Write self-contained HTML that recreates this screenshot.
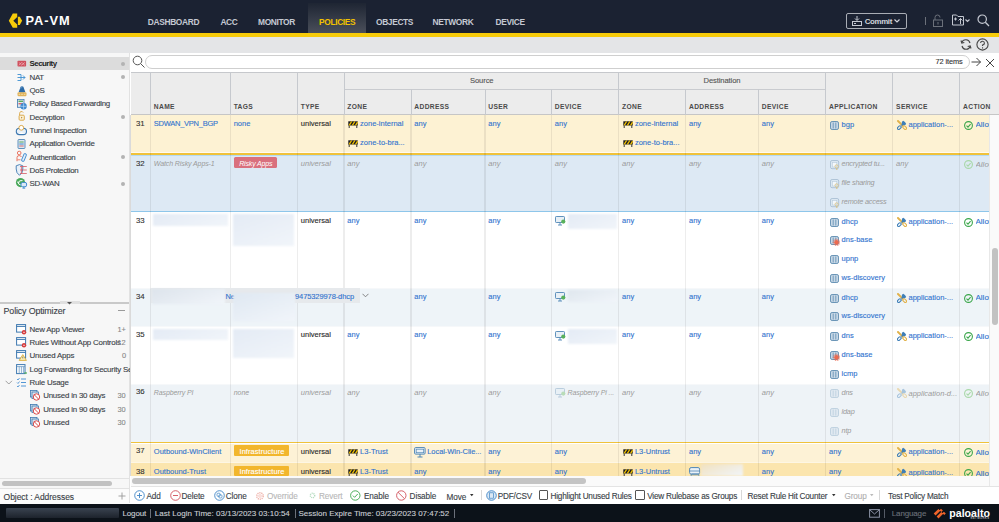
<!DOCTYPE html>
<html><head><meta charset="utf-8"><style>
html,body{margin:0;padding:0;}
body{width:999px;height:522px;overflow:hidden;position:relative;background:#fff;font-family:"Liberation Sans",sans-serif;}
.t{position:absolute;white-space:nowrap;}
.s{-webkit-text-stroke:0.12px currentColor;}
.b{position:absolute;box-sizing:content-box;}
</style></head><body>
<div class="b" style="left:0px;top:0px;width:999px;height:33px;background:#1b2232;"></div>
<div class="b" style="left:0px;top:33px;width:999px;height:4px;background:#f7cb0a;"></div>
<svg class="b" style="left:8px;top:13px;" width="16" height="16" viewBox="0 0 16 16"><path fill-rule="evenodd" d="M4.8 0.6 H9.2 V14.8 H4.8 L0.8 7.7 Z M9.2 4 L5.3 7.7 L9.2 11.5 Z" fill="#f7cb0a"/><path d="M9.9 3.8 H11.8 L14.1 7.7 L11.8 11.9 H9.9 Z" fill="#f7cb0a"/></svg>
<div class="t" style="left:25.50px;top:15.06px;font-size:12.8px;line-height:12px;color:#ffffff;font-weight:bold;letter-spacing:1.0px;">PA-VM</div>
<div class="b" style="left:308px;top:3px;width:58px;height:30px;background:linear-gradient(#1e2533,#4a4f5a);"></div>
<div class="t" style="left:147.80px;top:16.29px;font-size:8.4px;line-height:12px;color:#c5c9d2;font-weight:bold;letter-spacing:-0.35px;">DASHBOARD</div>
<div class="t" style="left:220.40px;top:16.29px;font-size:8.4px;line-height:12px;color:#c5c9d2;font-weight:bold;letter-spacing:-0.35px;">ACC</div>
<div class="t" style="left:258.00px;top:16.29px;font-size:8.4px;line-height:12px;color:#c5c9d2;font-weight:bold;letter-spacing:-0.35px;">MONITOR</div>
<div class="t" style="left:319.00px;top:16.29px;font-size:8.4px;line-height:12px;color:#f2c200;font-weight:bold;letter-spacing:-0.35px;">POLICIES</div>
<div class="t" style="left:376.00px;top:16.29px;font-size:8.4px;line-height:12px;color:#c5c9d2;font-weight:bold;letter-spacing:-0.35px;">OBJECTS</div>
<div class="t" style="left:432.60px;top:16.29px;font-size:8.4px;line-height:12px;color:#c5c9d2;font-weight:bold;letter-spacing:-0.35px;">NETWORK</div>
<div class="t" style="left:495.60px;top:16.29px;font-size:8.4px;line-height:12px;color:#c5c9d2;font-weight:bold;letter-spacing:-0.35px;">DEVICE</div>
<div class="b" style="left:846px;top:13px;width:59px;height:14px;border:1.2px solid #a9adb5;border-radius:2px;"></div>
<svg class="b" style="left:852px;top:16px;" width="10" height="10" viewBox="0 0 10 10"><path d="M5 0 V4 M3 2.5 L5 4.5 L7 2.5" stroke="#c5c9d2" stroke-width="1" fill="none"/><rect x="0.5" y="5.5" width="9" height="4" fill="none" stroke="#c5c9d2" stroke-width="1"/><rect x="2" y="7" width="2" height="1" fill="#c5c9d2"/></svg>
<div class="t" style="left:864.70px;top:15.56px;font-size:7.9px;line-height:12px;color:#d0d3da;font-weight:bold;letter-spacing:-0.35px;">Commit</div>
<svg class="b" style="left:894px;top:19px;" width="6" height="4" viewBox="0 0 6 4"><path d="M0.5 0.5 L3 3 L5.5 0.5" stroke="#d0d3da" stroke-width="1.2" fill="none"/></svg>
<div class="b" style="left:925px;top:17px;width:1px;height:8px;background:#6b707a;"></div>
<svg class="b" style="left:932px;top:14px;" width="12" height="13" viewBox="0 0 12 13"><path d="M3 6 V3.5 A2.5 2.5 0 0 1 8 3.5" stroke="#6b707a" stroke-width="1" fill="none"/><rect x="1.5" y="6" width="9" height="6.5" fill="none" stroke="#6b707a" stroke-width="1"/><rect x="5.5" y="8" width="1" height="2.5" fill="#6b707a"/></svg>
<svg class="b" style="left:952px;top:14px;" width="20" height="12" viewBox="0 0 20 12"><path d="M0.5 1 H4.5 L6 2.5 H11.5 V11 H0.5 Z" fill="none" stroke="#c5c9d2" stroke-width="1"/><path d="M2 5 H5 M3.5 3.5 V6.5 M8.5 10 V4.5 M6.5 6.5 L8.5 4.5 L10.5 6.5" stroke="#c5c9d2" stroke-width="1" fill="none"/><path d="M13.5 5.5 L15.5 7.5 L17.5 5.5" stroke="#c5c9d2" stroke-width="1.1" fill="none"/></svg>
<svg class="b" style="left:977px;top:14px;" width="13" height="13" viewBox="0 0 13 13"><circle cx="5.2" cy="5.2" r="4.2" stroke="#c5c9d2" stroke-width="1.2" fill="none"/><path d="M8.3 8.3 L12 12" stroke="#c5c9d2" stroke-width="1.3"/></svg>
<div class="b" style="left:0px;top:37px;width:999px;height:16px;background:#e4e5e7;"></div>
<svg class="b" style="left:960px;top:39px;" width="12" height="11" viewBox="0 0 12 11"><path d="M10 4 A4.3 4.3 0 0 0 1.8 3.5 M2 7 A4.3 4.3 0 0 0 10.2 7.5" stroke="#444" stroke-width="1.1" fill="none"/><path d="M1 1.5 L1.8 4 L4.3 3.5 M11 9.5 L10.2 7 L7.7 7.5" stroke="#444" stroke-width="1.1" fill="none"/></svg>
<svg class="b" style="left:976px;top:38px;" width="13" height="13" viewBox="0 0 13 13"><circle cx="6.5" cy="6.5" r="5.6" stroke="#444" stroke-width="1.1" fill="none"/><path d="M4.6 5 A1.9 1.9 0 1 1 6.5 7 V8" stroke="#444" stroke-width="1.1" fill="none"/><rect x="6" y="9.3" width="1.1" height="1.2" fill="#444"/></svg>
<div class="b" style="left:0px;top:53px;width:129px;height:450px;background:#f7f7f7;"></div>
<div class="b" style="left:129px;top:53px;width:1.2px;height:450px;background:#e2e2e2;"></div>
<div class="b" style="left:0px;top:57px;width:129px;height:13px;background:#dcdcdc;"></div>
<div class="t" style="left:29.50px;top:58.26px;font-size:7.9px;line-height:12px;color:#222;font-weight:bold;letter-spacing:-0.5px;">Security</div>
<div class="b" style="left:121px;top:61.6px;width:4px;height:4px;border-radius:50%;background:#b3b3b3"></div>
<div class="t s" style="left:29.50px;top:71.59px;font-size:7.9px;line-height:12px;color:#3a3f47;letter-spacing:-0.3px;">NAT</div>
<div class="b" style="left:121px;top:74.9px;width:4px;height:4px;border-radius:50%;background:#b3b3b3"></div>
<div class="t s" style="left:29.50px;top:84.92px;font-size:7.9px;line-height:12px;color:#3a3f47;letter-spacing:-0.3px;">QoS</div>
<div class="t s" style="left:29.50px;top:98.25px;font-size:7.9px;line-height:12px;color:#3a3f47;letter-spacing:-0.3px;">Policy Based Forwarding</div>
<div class="t s" style="left:29.50px;top:111.58px;font-size:7.9px;line-height:12px;color:#3a3f47;letter-spacing:-0.3px;">Decryption</div>
<div class="b" style="left:121px;top:114.9px;width:4px;height:4px;border-radius:50%;background:#b3b3b3"></div>
<div class="t s" style="left:29.50px;top:124.91px;font-size:7.9px;line-height:12px;color:#3a3f47;letter-spacing:-0.3px;">Tunnel Inspection</div>
<div class="t s" style="left:29.50px;top:138.24px;font-size:7.9px;line-height:12px;color:#3a3f47;letter-spacing:-0.3px;">Application Override</div>
<div class="t s" style="left:29.50px;top:151.57px;font-size:7.9px;line-height:12px;color:#3a3f47;letter-spacing:-0.3px;">Authentication</div>
<div class="b" style="left:121px;top:154.9px;width:4px;height:4px;border-radius:50%;background:#b3b3b3"></div>
<div class="t s" style="left:29.50px;top:164.90px;font-size:7.9px;line-height:12px;color:#3a3f47;letter-spacing:-0.3px;">DoS Protection</div>
<div class="t s" style="left:29.50px;top:178.23px;font-size:7.9px;line-height:12px;color:#3a3f47;letter-spacing:-0.3px;">SD-WAN</div>
<div class="b" style="left:121px;top:181.6px;width:4px;height:4px;border-radius:50%;background:#b3b3b3"></div>
<svg class="b" style="left:16.5px;top:60.4px;" width="10" height="11" viewBox="0 0 10 11"><rect x="0.5" y="0.8" width="8.6" height="5.8" rx="0.8" fill="#cf4f5c"/><path d="M1.8 2.4 L3.4 3.8 L1.8 5.2 M4.8 2.4 L3.4 3.8 L4.8 5.2 M7.8 2.4 L6.2 3.8 L7.8 5.2 M4.8 2.4 L6.2 3.8 L4.8 5.2" stroke="#f3c6cb" stroke-width="0.6" fill="none"/></svg>
<svg class="b" style="left:16.5px;top:72.63px;" width="10" height="11" viewBox="0 0 10 11"><path d="M0.5 1.5 H4 M0.5 4.5 H8 M0.5 7.5 H4 M4 1.5 V7.5 M6 2.5 L8 4.5 L6 6.5" stroke="#3c8fd0" stroke-width="0.9" fill="none"/></svg>
<svg class="b" style="left:16.5px;top:85.96px;" width="10" height="11" viewBox="0 0 10 11"><path d="M5 0.3 Q6.8 0.3 7 2.5 L8.3 6 Q5 7.2 1.7 6 L3 2.5 Q3.2 0.3 5 0.3 Z" fill="#2c6aa6"/><path d="M3.6 2.5 Q4.3 1.4 5.2 1.6" stroke="#8fc0ea" stroke-width="0.6" fill="none"/><rect x="0.5" y="6.3" width="9" height="4" rx="1.2" fill="#e0b35a"/><path d="M1.6 8.3 h1.6 M4.2 8.3 h1.6 M6.8 8.3 h1.6" stroke="#f7e8c6" stroke-width="0.8"/></svg>
<svg class="b" style="left:16.5px;top:99.29px;" width="10" height="11" viewBox="0 0 10 11"><rect x="0.5" y="0.3" width="6.5" height="8" fill="#dfe7ee" stroke="#3d78b0" stroke-width="0.8"/><rect x="1.5" y="1.6" width="4.5" height="1.4" fill="#5cab5c"/><rect x="1.5" y="4" width="4.5" height="1.4" fill="#d96a6a"/><circle cx="6.6" cy="7.3" r="3.2" fill="#3e8ad0"/><path d="M3.6 7.3 H9.6 M6.6 4.3 V10.3" stroke="#cfe3f5" stroke-width="0.6"/></svg>
<svg class="b" style="left:16.5px;top:139.28000000000003px;" width="10" height="11" viewBox="0 0 10 11"><rect x="1" y="0.5" width="7" height="9" rx="0.8" fill="#dbe6f0" stroke="#3d78b0" stroke-width="0.8"/><path d="M2.3 3 H6.7" stroke="#5cab5c" stroke-width="1"/><path d="M2.3 5 H6.7" stroke="#3e8ad0" stroke-width="1"/><path d="M2.3 7 H6.7" stroke="#d96a6a" stroke-width="1"/></svg>
<svg class="b" style="left:14px;top:110px;" width="16" height="80" viewBox="0 0 16 80">
<path d="M5.6 5.2 V3.6 A1.9 1.9 0 0 1 9.2 2.6" stroke="#d8a23c" stroke-width="0.9" fill="none"/>
<rect x="5.1" y="5.2" width="5.2" height="5" rx="1" fill="#fbf1d8" stroke="#d8a23c" stroke-width="0.9"/>
<path d="M7 6.8 L8.6 7.7 L7 8.6 Z" fill="#b8862c"/>
<rect x="2.3" y="18.3" width="10.2" height="6.3" rx="3.1" fill="#e8f0f8" stroke="#3d78b0" stroke-width="1.1"/>
<circle cx="7.3" cy="17.8" r="2.4" fill="#fff" stroke="#d8a23c" stroke-width="0.9"/>
<path d="M5 24 Q7.3 20.6 10 24 Z" fill="#fff"/>
<circle cx="5.2" cy="43" r="1.8" fill="none" stroke="#e8654f" stroke-width="0.9"/>
<path d="M3 51.2 V47.5 Q3 45.6 5.2 45.6 Q7 45.6 7.4 47" stroke="#e8654f" stroke-width="0.9" fill="none"/>
<path d="M3.4 49.8 H6.5" stroke="#e8654f" stroke-width="0.8"/>
<rect x="-1.3" y="-4" width="2.6" height="8" rx="1.1" transform="translate(10 47.5) rotate(22)" fill="#e3eef8" stroke="#3e8ad0" stroke-width="0.9"/>
<path d="M5.5 54.6 L8.8 55.8 V59 Q8.8 63.2 5.5 65.3 Q2.2 63.2 2.2 59 V55.8 Z" fill="#e8f0f8" stroke="#3d78b0" stroke-width="0.9"/>
<path d="M7.4 56.5 V63.5 M6 56.5 H12.8 M6 60 H12.8 M6 63.5 H12.8" stroke="#d65a64" stroke-width="0.8"/>
<circle cx="6.5" cy="72.6" r="4.6" fill="#49a85a"/>
<path d="M8.5 70.6 Q5 70 4.2 72.6 Q4.6 75 7 75" stroke="#fff" stroke-width="1" fill="none"/>
<path d="M3.5 71.6 L4.2 73 L5.6 72" stroke="#fff" stroke-width="0.8" fill="none"/>
<rect x="7" y="72.4" width="5.6" height="4.4" rx="1.6" fill="#dbe9f6" stroke="#3e8ad0" stroke-width="1"/>
<path d="M9.8 76.8 V78 M8.5 78.2 H11.2" stroke="#3e8ad0" stroke-width="0.9"/>
</svg>
<div class="b" style="left:0px;top:301.5px;width:129px;height:2px;background:#c9c9c9;"></div>
<div class="b" style="left:60px;top:301px;width:20px;height:3px;background:#e0e0e0;"></div>
<svg class="b" style="left:67px;top:302px;" width="6" height="3" viewBox="0 0 6 3"><path d="M0 0 H5 L2.5 2.5 Z" fill="#555"/></svg>
<div class="t s" style="left:3.60px;top:304.72px;font-size:8.9px;line-height:12px;color:#3a3f47;letter-spacing:-0.15px;">Policy Optimizer</div>
<div class="b" style="left:118px;top:309.5px;width:7px;height:1px;background:#9a9a9a;"></div>
<div class="t s" style="left:29.50px;top:323.56px;font-size:7.9px;line-height:12px;color:#3a3f47;letter-spacing:-0.2px;">New App Viewer</div>
<div class="t s" style="left:117.50px;top:323.74px;font-size:7.4px;line-height:12px;color:#888;">1+</div>
<svg class="b" style="left:16px;top:324px;" width="11" height="11" viewBox="0 0 11 11"><rect x="0.6" y="0.6" width="9" height="7.5" fill="#fff" stroke="#3d78b0" stroke-width="1"/><path d="M0.6 2.4 H9.6" stroke="#3d78b0" stroke-width="1"/><circle cx="8" cy="8.3" r="2.2" fill="#d63a3a"/><path d="M7 8.3 H9" stroke="#fff" stroke-width="0.7"/></svg>
<div class="t s" style="left:29.50px;top:336.89px;font-size:7.9px;line-height:12px;color:#3a3f47;letter-spacing:-0.2px;">Rules Without App Controls</div>
<div class="t s" style="left:117.50px;top:337.07px;font-size:7.4px;line-height:12px;color:#888;">12</div>
<svg class="b" style="left:16px;top:337px;" width="11" height="11" viewBox="0 0 11 11"><rect x="0.6" y="0.6" width="9" height="7.5" fill="#fff" stroke="#3d78b0" stroke-width="1"/><path d="M0.6 2.4 H9.6" stroke="#3d78b0" stroke-width="1"/><circle cx="8" cy="8.3" r="2.2" fill="#d63a3a"/><path d="M7 8.3 H9" stroke="#fff" stroke-width="0.7"/></svg>
<div class="t s" style="left:29.50px;top:350.22px;font-size:7.9px;line-height:12px;color:#3a3f47;letter-spacing:-0.2px;">Unused Apps</div>
<div class="t s" style="left:122.00px;top:350.40px;font-size:7.4px;line-height:12px;color:#888;">0</div>
<svg class="b" style="left:16px;top:350px;" width="11" height="11" viewBox="0 0 11 11"><rect x="0.6" y="0.6" width="9" height="7.5" fill="#fff" stroke="#3d78b0" stroke-width="1"/><path d="M0.6 2.4 H9.6" stroke="#3d78b0" stroke-width="1"/><path d="M6.8 4.6 L10.4 10.4 H3.2 Z" fill="#fbeeb8" stroke="#d9a62a" stroke-width="0.8"/><path d="M6.8 6.6 V8.4" stroke="#333" stroke-width="0.6"/></svg>
<div class="t s" style="left:29.50px;top:363.55px;font-size:7.9px;line-height:12px;color:#3a3f47;letter-spacing:-0.2px;">Log Forwarding for Security Services</div>
<svg class="b" style="left:16px;top:364px;" width="11" height="11" viewBox="0 0 11 11"><rect x="0.6" y="0.6" width="8.4" height="9" fill="#fff" stroke="#3d78b0" stroke-width="1"/><path d="M0.6 2.6 H9 M3.2 2.6 V9.6 M5.4 2.6 V9.6 M7.4 2.6 V9.6" stroke="#5d8fbf" stroke-width="0.7"/><path d="M8 9 L10.5 9 M9.5 8 L10.5 9 L9.5 10" stroke="#4caa5a" stroke-width="0.9" fill="none"/></svg>
<div class="t s" style="left:29.50px;top:376.88px;font-size:7.9px;line-height:12px;color:#3a3f47;letter-spacing:-0.2px;">Rule Usage</div>
<svg class="b" style="left:4.5px;top:379.82px;" width="8" height="5" viewBox="0 0 8 5"><path d="M0.6 0.8 L3.8 4 L7 0.8" stroke="#8a8a8a" stroke-width="0.8" fill="none"/></svg>
<svg class="b" style="left:16px;top:377px;" width="11" height="11" viewBox="0 0 11 11"><path d="M1 2 L2 3 L3.5 1 M1 5.5 L2 6.5 L3.5 4.5 M1 9 L2 10 L3.5 8" stroke="#3e8ad0" stroke-width="0.8" fill="none"/><path d="M5 2 H10 M5 5.5 H10 M5 9 H10" stroke="#3e8ad0" stroke-width="0.9"/></svg>
<div class="t s" style="left:43.20px;top:390.21px;font-size:7.9px;line-height:12px;color:#3a3f47;letter-spacing:-0.2px;">Unused in 30 days</div>
<div class="t s" style="left:117.50px;top:390.39px;font-size:7.4px;line-height:12px;color:#888;">30</div>
<svg class="b" style="left:29.5px;top:390px;" width="11" height="11" viewBox="0 0 11 11"><rect x="0.5" y="0.5" width="6.5" height="6.5" fill="#dbe6f0" stroke="#3d78b0" stroke-width="0.8"/><rect x="2" y="2" width="6.5" height="6.5" fill="#dbe6f0" stroke="#3d78b0" stroke-width="0.8"/><circle cx="6.5" cy="7" r="3.2" fill="#fff" stroke="#d63a3a" stroke-width="0.9"/><path d="M4.3 4.8 L8.7 9.2" stroke="#d63a3a" stroke-width="0.9"/></svg>
<div class="t s" style="left:43.20px;top:403.54px;font-size:7.9px;line-height:12px;color:#3a3f47;letter-spacing:-0.2px;">Unused in 90 days</div>
<div class="t s" style="left:117.50px;top:403.72px;font-size:7.4px;line-height:12px;color:#888;">30</div>
<svg class="b" style="left:29.5px;top:404px;" width="11" height="11" viewBox="0 0 11 11"><rect x="0.5" y="0.5" width="6.5" height="6.5" fill="#dbe6f0" stroke="#3d78b0" stroke-width="0.8"/><rect x="2" y="2" width="6.5" height="6.5" fill="#dbe6f0" stroke="#3d78b0" stroke-width="0.8"/><circle cx="6.5" cy="7" r="3.2" fill="#fff" stroke="#d63a3a" stroke-width="0.9"/><path d="M4.3 4.8 L8.7 9.2" stroke="#d63a3a" stroke-width="0.9"/></svg>
<div class="t s" style="left:43.20px;top:416.87px;font-size:7.9px;line-height:12px;color:#3a3f47;letter-spacing:-0.2px;">Unused</div>
<div class="t s" style="left:117.50px;top:417.05px;font-size:7.4px;line-height:12px;color:#888;">30</div>
<svg class="b" style="left:29.5px;top:417px;" width="11" height="11" viewBox="0 0 11 11"><rect x="0.5" y="0.5" width="6.5" height="6.5" fill="#dbe6f0" stroke="#3d78b0" stroke-width="0.8"/><rect x="2" y="2" width="6.5" height="6.5" fill="#dbe6f0" stroke="#3d78b0" stroke-width="0.8"/><circle cx="6.5" cy="7" r="3.2" fill="#fff" stroke="#d63a3a" stroke-width="0.9"/><path d="M4.3 4.8 L8.7 9.2" stroke="#d63a3a" stroke-width="0.9"/></svg>
<div class="b" style="left:0px;top:478px;width:129px;height:0.8px;background:#e2e2e2;"></div>
<div class="b" style="left:2px;top:481px;width:109.5px;height:5px;background:#c2c2c2;border-radius:3px;"></div>
<div class="b" style="left:0px;top:488px;width:129px;height:1px;background:#e2e2e2;"></div>
<div class="b" style="left:0px;top:489px;width:129px;height:14.5px;background:#fbfbfb;"></div>
<div class="t s" style="left:3.60px;top:491.05px;font-size:8.5px;line-height:12px;color:#3a3f47;letter-spacing:-0.05px;">Object : Addresses</div>
<svg class="b" style="left:118px;top:492px;" width="8" height="8" viewBox="0 0 8 8"><path d="M4 0.5 V7.5 M0.5 4 H7.5" stroke="#999" stroke-width="0.9"/></svg>
<div class="b" style="left:130.5px;top:270px;width:0.8px;height:20px;background:#cfcfcf;"></div>
<svg class="b" style="left:130px;top:279px;" width="4" height="5" viewBox="0 0 4 5"><path d="M3 0.5 L1 2.5 L3 4.5" stroke="#888" stroke-width="0.7" fill="none"/></svg>
<div class="b" style="left:130.5px;top:53px;width:869px;height:450px;background:#ffffff;"></div>
<svg class="b" style="left:132px;top:55px;" width="14" height="14" viewBox="0 0 14 14"><circle cx="5.5" cy="5.5" r="4.3" stroke="#555" stroke-width="1" fill="none"/><path d="M8.6 8.6 L12.5 12.5" stroke="#555" stroke-width="1"/></svg>
<div class="b" style="left:144.5px;top:55px;width:823px;height:11.5px;border:1px solid #cfcfcf;border-radius:7px;background:#fff"></div>
<div class="t s" style="left:935.50px;top:56.44px;font-size:7.4px;line-height:12px;color:#333;letter-spacing:-0.1px;">72 items</div>
<svg class="b" style="left:971px;top:57.2px;" width="11" height="10" viewBox="0 0 11 10"><path d="M0.5 5 H9.5 M5.5 1 L9.5 5 L5.5 9" stroke="#444" stroke-width="1" fill="none"/></svg>
<svg class="b" style="left:985px;top:57.5px;" width="10" height="10" viewBox="0 0 10 10"><path d="M1 1 L9 9 M9 1 L1 9" stroke="#444" stroke-width="1"/></svg>
<div class="b" style="left:130.5px;top:72.2px;width:869px;height:42.5px;background:#ececec;"></div>
<div class="b" style="left:130.5px;top:71.6px;width:869px;height:1.2px;background:#c6c8cc;"></div>
<div class="b" style="left:130.5px;top:114px;width:869px;height:1.2px;background:#c6c6c6;"></div>
<div class="b" style="left:343.5px;top:89px;width:481.8px;height:1px;background:#c9cbcf;"></div>
<div class="b" style="left:150px;top:72px;width:1px;height:42.5px;background:#c6c9ce;"></div>
<div class="b" style="left:229.9px;top:72px;width:1px;height:42.5px;background:#c6c9ce;"></div>
<div class="b" style="left:297px;top:72px;width:1px;height:42.5px;background:#c6c9ce;"></div>
<div class="b" style="left:343.5px;top:72px;width:1px;height:42.5px;background:#c6c9ce;"></div>
<div class="b" style="left:410.5px;top:89px;width:1px;height:25.5px;background:#c6c9ce;"></div>
<div class="b" style="left:484.5px;top:89px;width:1px;height:25.5px;background:#c6c9ce;"></div>
<div class="b" style="left:551px;top:89px;width:1px;height:25.5px;background:#c6c9ce;"></div>
<div class="b" style="left:618.3px;top:72px;width:1px;height:42.5px;background:#c6c9ce;"></div>
<div class="b" style="left:685.2px;top:89px;width:1px;height:25.5px;background:#c6c9ce;"></div>
<div class="b" style="left:758px;top:89px;width:1px;height:25.5px;background:#c6c9ce;"></div>
<div class="b" style="left:825.3px;top:72px;width:1px;height:42.5px;background:#c6c9ce;"></div>
<div class="b" style="left:892.3px;top:72px;width:1px;height:42.5px;background:#c6c9ce;"></div>
<div class="b" style="left:959.3px;top:72px;width:1px;height:42.5px;background:#c6c9ce;"></div>
<div class="t" style="left:153.80px;top:100.88px;font-size:6.7px;line-height:12px;color:#4a4a4a;font-weight:bold;letter-spacing:0.34px;">NAME</div>
<div class="t" style="left:233.70px;top:100.88px;font-size:6.7px;line-height:12px;color:#4a4a4a;font-weight:bold;letter-spacing:0.34px;">TAGS</div>
<div class="t" style="left:300.80px;top:100.88px;font-size:6.7px;line-height:12px;color:#4a4a4a;font-weight:bold;letter-spacing:0.34px;">TYPE</div>
<div class="t" style="left:347.30px;top:100.88px;font-size:6.7px;line-height:12px;color:#4a4a4a;font-weight:bold;letter-spacing:0.34px;">ZONE</div>
<div class="t" style="left:414.30px;top:100.88px;font-size:6.7px;line-height:12px;color:#4a4a4a;font-weight:bold;letter-spacing:0.34px;">ADDRESS</div>
<div class="t" style="left:488.30px;top:100.88px;font-size:6.7px;line-height:12px;color:#4a4a4a;font-weight:bold;letter-spacing:0.34px;">USER</div>
<div class="t" style="left:554.80px;top:100.88px;font-size:6.7px;line-height:12px;color:#4a4a4a;font-weight:bold;letter-spacing:0.34px;">DEVICE</div>
<div class="t" style="left:622.10px;top:100.88px;font-size:6.7px;line-height:12px;color:#4a4a4a;font-weight:bold;letter-spacing:0.34px;">ZONE</div>
<div class="t" style="left:689.00px;top:100.88px;font-size:6.7px;line-height:12px;color:#4a4a4a;font-weight:bold;letter-spacing:0.34px;">ADDRESS</div>
<div class="t" style="left:761.80px;top:100.88px;font-size:6.7px;line-height:12px;color:#4a4a4a;font-weight:bold;letter-spacing:0.34px;">DEVICE</div>
<div class="t" style="left:829.10px;top:100.88px;font-size:6.7px;line-height:12px;color:#4a4a4a;font-weight:bold;letter-spacing:0.34px;">APPLICATION</div>
<div class="t" style="left:896.10px;top:100.88px;font-size:6.7px;line-height:12px;color:#4a4a4a;font-weight:bold;letter-spacing:0.34px;">SERVICE</div>
<div class="t" style="left:963.10px;top:100.88px;font-size:6.7px;line-height:12px;color:#4a4a4a;font-weight:bold;letter-spacing:0.34px;">ACTION</div>
<div class="t s" style="left:470.00px;top:75.37px;font-size:7.6px;line-height:12px;color:#555;letter-spacing:-0.1px;">Source</div>
<div class="t s" style="left:703.50px;top:75.37px;font-size:7.6px;line-height:12px;color:#555;letter-spacing:-0.1px;">Destination</div>
<div class="b" style="left:130.5px;top:115px;width:858px;height:38px;background:#fdf2d3;"></div>
<div class="b" style="left:130.5px;top:155px;width:858px;height:56px;background:#dde9f4;"></div>
<div class="b" style="left:130.5px;top:212px;width:858px;height:76px;background:#ffffff;"></div>
<div class="b" style="left:130.5px;top:288px;width:858px;height:38.5px;background:#eef4f8;"></div>
<div class="b" style="left:130.5px;top:326.5px;width:858px;height:57.5px;background:#ffffff;"></div>
<div class="b" style="left:130.5px;top:384px;width:858px;height:57.5px;background:#eef3f7;"></div>
<div class="b" style="left:130.5px;top:443.5px;width:858px;height:19.100000000000023px;background:#fdf2d6;"></div>
<div class="b" style="left:130.5px;top:462.6px;width:858px;height:13.0px;background:#fbe5ae;"></div>
<div class="b" style="left:130.5px;top:152.4px;width:858px;height:0.7px;background:#fffaf0;"></div>
<div class="b" style="left:130.5px;top:153.1px;width:858px;height:1.8px;background:#f0c23a;"></div>
<div class="b" style="left:130.5px;top:154.9px;width:858px;height:0.8px;background:#b5daf2;"></div>
<div class="b" style="left:130.5px;top:211px;width:858px;height:1.2px;background:#8ec6ea;"></div>
<div class="b" style="left:130.5px;top:441.6px;width:858px;height:1.7px;background:#f0c23a;"></div>
<div class="b" style="left:130.5px;top:287.5px;width:858px;height:0.8px;background:#f6f8fa;"></div>
<div class="b" style="left:130.5px;top:326px;width:858px;height:0.8px;background:#f6f8fa;"></div>
<div class="b" style="left:130.5px;top:383.5px;width:858px;height:0.8px;background:#f6f8fa;"></div>
<div class="b" style="left:130.5px;top:462.1px;width:858px;height:0.8px;background:#fdf6e4;"></div>
<div class="b" style="left:149.8px;top:115px;width:1.4px;height:361.3px;background:rgba(0,0,0,0.07);"></div>
<div class="b" style="left:229.70000000000002px;top:115px;width:1.4px;height:361.3px;background:rgba(0,0,0,0.07);"></div>
<div class="b" style="left:296.8px;top:115px;width:1.4px;height:361.3px;background:rgba(0,0,0,0.07);"></div>
<div class="b" style="left:343.3px;top:115px;width:1.4px;height:361.3px;background:rgba(0,0,0,0.07);"></div>
<div class="b" style="left:410.3px;top:115px;width:1.4px;height:361.3px;background:rgba(0,0,0,0.07);"></div>
<div class="b" style="left:484.3px;top:115px;width:1.4px;height:361.3px;background:rgba(0,0,0,0.07);"></div>
<div class="b" style="left:550.8px;top:115px;width:1.4px;height:361.3px;background:rgba(0,0,0,0.07);"></div>
<div class="b" style="left:618.0999999999999px;top:115px;width:1.4px;height:361.3px;background:rgba(0,0,0,0.07);"></div>
<div class="b" style="left:685.0px;top:115px;width:1.4px;height:361.3px;background:rgba(0,0,0,0.07);"></div>
<div class="b" style="left:757.8px;top:115px;width:1.4px;height:361.3px;background:rgba(0,0,0,0.07);"></div>
<div class="b" style="left:825.0999999999999px;top:115px;width:1.4px;height:361.3px;background:rgba(0,0,0,0.07);"></div>
<div class="b" style="left:892.0999999999999px;top:115px;width:1.4px;height:361.3px;background:rgba(0,0,0,0.07);"></div>
<div class="b" style="left:959.0999999999999px;top:115px;width:1.4px;height:361.3px;background:rgba(0,0,0,0.07);"></div>
<div class="b" style="left:129.6px;top:115px;width:1px;height:361px;background:#dadada;"></div>
<div class="t s" style="left:136.00px;top:117.80px;font-size:7.8px;line-height:12px;color:#333;">31</div>
<div class="t s" style="left:153.80px;top:117.90px;font-size:7.5px;line-height:12px;color:#3274cf;letter-spacing:-0.25px;">SDWAN_VPN_BGP</div>
<div class="t s" style="left:233.70px;top:117.90px;font-size:7.5px;line-height:12px;color:#3274cf;">none</div>
<div class="t s" style="left:300.80px;top:117.90px;font-size:7.5px;line-height:12px;color:#2b2b2b;">universal</div>
<svg class="b" style="left:348.0px;top:121.0px;" width="10" height="8" viewBox="0 0 10 8"><path d="M1.2 3.5 V7 M8.8 3.5 V7" stroke="#333" stroke-width="1"/><rect x="0.3" y="0.3" width="9.4" height="4.2" fill="#1d1d1d"/><path d="M1.2 4.3 L3.6 0.5 M4.4 4.3 L6.8 0.5 M7.6 4.3 L9.6 1.2" stroke="#f2c200" stroke-width="1.3"/></svg>
<div class="t s" style="left:360.10px;top:117.90px;font-size:7.5px;line-height:12px;color:#3274cf;">zone-internal</div>
<svg class="b" style="left:348.0px;top:139.7px;" width="10" height="8" viewBox="0 0 10 8"><path d="M1.2 3.5 V7 M8.8 3.5 V7" stroke="#333" stroke-width="1"/><rect x="0.3" y="0.3" width="9.4" height="4.2" fill="#1d1d1d"/><path d="M1.2 4.3 L3.6 0.5 M4.4 4.3 L6.8 0.5 M7.6 4.3 L9.6 1.2" stroke="#f2c200" stroke-width="1.3"/></svg>
<div class="t s" style="left:360.10px;top:136.60px;font-size:7.5px;line-height:12px;color:#3274cf;">zone-to-bra...</div>
<div class="t s" style="left:414.30px;top:117.90px;font-size:7.5px;line-height:12px;color:#3274cf;">any</div>
<div class="t s" style="left:488.30px;top:117.90px;font-size:7.5px;line-height:12px;color:#3274cf;">any</div>
<div class="t s" style="left:554.80px;top:117.90px;font-size:7.5px;line-height:12px;color:#3274cf;">any</div>
<svg class="b" style="left:622.8px;top:121.0px;" width="10" height="8" viewBox="0 0 10 8"><path d="M1.2 3.5 V7 M8.8 3.5 V7" stroke="#333" stroke-width="1"/><rect x="0.3" y="0.3" width="9.4" height="4.2" fill="#1d1d1d"/><path d="M1.2 4.3 L3.6 0.5 M4.4 4.3 L6.8 0.5 M7.6 4.3 L9.6 1.2" stroke="#f2c200" stroke-width="1.3"/></svg>
<div class="t s" style="left:634.90px;top:117.90px;font-size:7.5px;line-height:12px;color:#3274cf;">zone-internal</div>
<svg class="b" style="left:622.8px;top:139.7px;" width="10" height="8" viewBox="0 0 10 8"><path d="M1.2 3.5 V7 M8.8 3.5 V7" stroke="#333" stroke-width="1"/><rect x="0.3" y="0.3" width="9.4" height="4.2" fill="#1d1d1d"/><path d="M1.2 4.3 L3.6 0.5 M4.4 4.3 L6.8 0.5 M7.6 4.3 L9.6 1.2" stroke="#f2c200" stroke-width="1.3"/></svg>
<div class="t s" style="left:634.90px;top:136.60px;font-size:7.5px;line-height:12px;color:#3274cf;">zone-to-bra...</div>
<div class="t s" style="left:689.00px;top:117.90px;font-size:7.5px;line-height:12px;color:#3274cf;">any</div>
<div class="t s" style="left:761.80px;top:117.90px;font-size:7.5px;line-height:12px;color:#3274cf;">any</div>
<svg class="b" style="left:830.0999999999999px;top:120.7px;" width="10" height="10" viewBox="0 0 10 10"><rect x="0.5" y="0.5" width="8" height="8" rx="1.6" fill="#c8d8e6" stroke="#5c8bb0" stroke-width="0.9"/><path d="M3.2 1.5 V7.5 M5.8 1.5 V7.5" stroke="#5c8bb0" stroke-width="0.8"/></svg>
<div class="t s" style="left:841.60px;top:118.60px;font-size:7.5px;line-height:12px;color:#3274cf;">bgp</div>
<svg class="b" style="left:896.5px;top:119.60000000000001px;" width="10" height="10" viewBox="0 0 10 10"><g transform="translate(-0.6 -0.6) scale(1.12)"><path d="M1.4 1.4 L5.6 5.6" stroke="#e2b24a" stroke-width="1.7" stroke-linecap="round"/><rect x="-1.9" y="-1.1" width="3.8" height="2.2" rx="1.1" transform="translate(7.4 7.4) rotate(45)" fill="none" stroke="#e2b24a" stroke-width="1"/><path d="M4.6 5.4 L6.9 3.1" stroke="#3f7fb8" stroke-width="1.3"/><rect x="-1.9" y="-1.1" width="3.8" height="2.2" rx="1.1" transform="translate(2.6 7.4) rotate(-45)" fill="none" stroke="#3f7fb8" stroke-width="1"/><path d="M6.2 1.3 A2 2 0 1 0 8.7 3.8 L7.6 2.4 Z" fill="#3f7fb8"/></g></svg>
<div class="t s" style="left:908.50px;top:118.80px;font-size:7.5px;line-height:12px;color:#3274cf;">application-...</div>
<svg class="b" style="left:963.9px;top:120.5px;" width="10" height="10" viewBox="0 0 10 10"><circle cx="4.5" cy="4.5" r="3.9" fill="none" stroke="#3aa64a" stroke-width="1.1"/><path d="M2.5 4.6 L4 6.1 L6.6 3.2" stroke="#3aa64a" stroke-width="1.1" fill="none"/></svg>
<div class="b" style="left:975.5px;top:118.7px;width:13.0px;height:12px;overflow:hidden">
<div class="t s" style="left:0.00px;top:0.73px;font-size:8.0px;line-height:12px;color:#3274cf;">Allow</div>
</div>
<div class="t s" style="left:136.00px;top:157.50px;font-size:7.8px;line-height:12px;color:#333;">32</div>
<div class="t" style="left:153.80px;top:157.77px;font-size:7.0px;line-height:12px;color:#9a9a9a;font-style:italic;letter-spacing:-0.1px;">Watch Risky Apps-1</div>
<div class="b" style="left:234px;top:157.3px;width:43.3px;height:10.5px;background:#d9707e;border-radius:1.5px"></div>
<div class="t" style="left:239.20px;top:157.77px;font-size:7.0px;line-height:12px;color:#fff;font-style:italic;letter-spacing:-0.15px;">Risky Apps</div>
<div class="t" style="left:300.80px;top:157.60px;font-size:7.5px;line-height:12px;color:#9a9a9a;font-style:italic;">universal</div>
<div class="t" style="left:347.30px;top:157.60px;font-size:7.5px;line-height:12px;color:#9a9a9a;font-style:italic;">any</div>
<div class="t" style="left:414.30px;top:157.60px;font-size:7.5px;line-height:12px;color:#9a9a9a;font-style:italic;">any</div>
<div class="t" style="left:488.30px;top:157.60px;font-size:7.5px;line-height:12px;color:#9a9a9a;font-style:italic;">any</div>
<div class="t" style="left:554.80px;top:157.60px;font-size:7.5px;line-height:12px;color:#9a9a9a;font-style:italic;">any</div>
<div class="t" style="left:622.10px;top:157.60px;font-size:7.5px;line-height:12px;color:#9a9a9a;font-style:italic;">any</div>
<div class="t" style="left:689.00px;top:157.60px;font-size:7.5px;line-height:12px;color:#9a9a9a;font-style:italic;">any</div>
<div class="t" style="left:761.80px;top:157.60px;font-size:7.5px;line-height:12px;color:#9a9a9a;font-style:italic;">any</div>
<svg class="b" style="left:830.0999999999999px;top:160.39999999999998px;" width="10" height="10" viewBox="0 0 10 10"><rect x="0.5" y="0.5" width="8.2" height="8.2" rx="1.6" fill="#dce8f2" stroke="#a9c0d4" stroke-width="0.9"/><rect x="2.3" y="2.6" width="4.5" height="4.4" fill="#f4f8fb" stroke="#b9cddd" stroke-width="0.6"/><circle cx="6.6" cy="6.4" r="1.6" fill="none" stroke="#dcc27e" stroke-width="0.8"/><path d="M6.6 8 V10 M6.6 9.3 H7.6" stroke="#dcc27e" stroke-width="0.7"/></svg>
<div class="t" style="left:841.60px;top:158.37px;font-size:7.3px;line-height:12px;color:#9a9a9a;font-style:italic;letter-spacing:-0.2px;">encrypted tu...</div>
<svg class="b" style="left:830.0999999999999px;top:179.09999999999997px;" width="10" height="10" viewBox="0 0 10 10"><rect x="0.5" y="0.5" width="8.2" height="8.2" rx="1.6" fill="#dce8f2" stroke="#a9c0d4" stroke-width="0.9"/><rect x="2.3" y="2.6" width="4.5" height="4.4" fill="#f4f8fb" stroke="#b9cddd" stroke-width="0.6"/><circle cx="6.6" cy="6.4" r="1.6" fill="none" stroke="#dcc27e" stroke-width="0.8"/><path d="M6.6 8 V10 M6.6 9.3 H7.6" stroke="#dcc27e" stroke-width="0.7"/></svg>
<div class="t" style="left:841.60px;top:177.07px;font-size:7.3px;line-height:12px;color:#9a9a9a;font-style:italic;letter-spacing:-0.2px;">file sharing</div>
<svg class="b" style="left:830.0999999999999px;top:197.79999999999998px;" width="10" height="10" viewBox="0 0 10 10"><rect x="0.5" y="0.5" width="8.2" height="8.2" rx="1.6" fill="#dce8f2" stroke="#a9c0d4" stroke-width="0.9"/><rect x="2.3" y="2.6" width="4.5" height="4.4" fill="#f4f8fb" stroke="#b9cddd" stroke-width="0.6"/><circle cx="6.6" cy="6.4" r="1.6" fill="none" stroke="#dcc27e" stroke-width="0.8"/><path d="M6.6 8 V10 M6.6 9.3 H7.6" stroke="#dcc27e" stroke-width="0.7"/></svg>
<div class="t" style="left:841.60px;top:195.77px;font-size:7.3px;line-height:12px;color:#9a9a9a;font-style:italic;letter-spacing:-0.2px;">remote access</div>
<div class="t" style="left:896.10px;top:157.60px;font-size:7.5px;line-height:12px;color:#9a9a9a;font-style:italic;">any</div>
<svg class="b" style="left:963.9px;top:160.2px;" width="10" height="10" viewBox="0 0 10 10"><circle cx="4.5" cy="4.5" r="3.9" fill="none" stroke="#a8d8a8" stroke-width="1.1"/><path d="M2.5 4.6 L4 6.1 L6.6 3.2" stroke="#a8d8a8" stroke-width="1.1" fill="none"/></svg>
<div class="b" style="left:975.5px;top:158.39999999999998px;width:13.0px;height:12px;overflow:hidden">
<div class="t" style="left:0.00px;top:0.73px;font-size:8.0px;line-height:12px;color:#9a9a9a;font-style:italic;">Allow</div>
</div>
<div class="t s" style="left:136.00px;top:214.50px;font-size:7.8px;line-height:12px;color:#333;">33</div>
<div class="b" style="left:152.5px;top:214px;width:75px;height:11.5px;background:linear-gradient(160deg,#e4ebf5,#f1f5fa);filter:blur(1.3px);"></div>
<div class="b" style="left:233px;top:214px;width:61px;height:31.5px;background:linear-gradient(160deg,#e4ebf5,#f1f5fa);filter:blur(1.3px);"></div>
<div class="t s" style="left:300.80px;top:214.90px;font-size:7.5px;line-height:12px;color:#2b2b2b;">universal</div>
<div class="t s" style="left:347.30px;top:214.90px;font-size:7.5px;line-height:12px;color:#3274cf;">any</div>
<div class="t s" style="left:414.30px;top:214.90px;font-size:7.5px;line-height:12px;color:#3274cf;">any</div>
<div class="t s" style="left:488.30px;top:214.90px;font-size:7.5px;line-height:12px;color:#3274cf;">any</div>
<svg class="b" style="left:555px;top:216.0px;" width="11" height="10" viewBox="0 0 11 10"><rect x="0.5" y="0.5" width="9" height="6" rx="0.8" fill="#e8f0f6" stroke="#4f86b5" stroke-width="0.9"/><path d="M3 9 H7 M5 6.5 V9" stroke="#4f86b5" stroke-width="0.9"/><circle cx="8.3" cy="5.6" r="2.1" fill="#59b15c"/></svg>
<div class="b" style="left:567.6px;top:214px;width:49px;height:15px;background:linear-gradient(160deg,#e4ebf5,#f1f5fa);filter:blur(1.3px);"></div>
<div class="t s" style="left:622.10px;top:214.90px;font-size:7.5px;line-height:12px;color:#3274cf;">any</div>
<div class="t s" style="left:689.00px;top:214.90px;font-size:7.5px;line-height:12px;color:#3274cf;">any</div>
<div class="t s" style="left:761.80px;top:214.90px;font-size:7.5px;line-height:12px;color:#3274cf;">any</div>
<svg class="b" style="left:830.0999999999999px;top:217.7px;" width="10" height="10" viewBox="0 0 10 10"><rect x="0.5" y="0.5" width="8" height="8" rx="1.6" fill="#c8d8e6" stroke="#5c8bb0" stroke-width="0.9"/><path d="M3.2 1.5 V7.5 M5.8 1.5 V7.5" stroke="#5c8bb0" stroke-width="0.8"/></svg>
<div class="t s" style="left:841.60px;top:215.60px;font-size:7.5px;line-height:12px;color:#3274cf;">dhcp</div>
<svg class="b" style="left:830.0999999999999px;top:236.39999999999998px;" width="10" height="10" viewBox="0 0 10 10"><rect x="0.5" y="0.5" width="8" height="8" rx="1.6" fill="#c8d8e6" stroke="#5c8bb0" stroke-width="0.9"/><path d="M3.2 1.5 V7.5 M5.8 1.5 V7.5" stroke="#5c8bb0" stroke-width="0.8"/><circle cx="6.5" cy="6.5" r="2.4" fill="#ec6a50"/><circle cx="6.5" cy="6.5" r="3.3" fill="none" stroke="#ec6a50" stroke-width="1" stroke-dasharray="1 0.9"/></svg>
<div class="t s" style="left:841.60px;top:234.30px;font-size:7.5px;line-height:12px;color:#3274cf;">dns-base</div>
<svg class="b" style="left:830.0999999999999px;top:255.09999999999997px;" width="10" height="10" viewBox="0 0 10 10"><rect x="0.5" y="0.5" width="8" height="8" rx="1.6" fill="#c8d8e6" stroke="#5c8bb0" stroke-width="0.9"/><path d="M3.2 1.5 V7.5 M5.8 1.5 V7.5" stroke="#5c8bb0" stroke-width="0.8"/></svg>
<div class="t s" style="left:841.60px;top:253.00px;font-size:7.5px;line-height:12px;color:#3274cf;">upnp</div>
<svg class="b" style="left:830.0999999999999px;top:273.8px;" width="10" height="10" viewBox="0 0 10 10"><rect x="0.5" y="0.5" width="8" height="8" rx="1.6" fill="#c8d8e6" stroke="#5c8bb0" stroke-width="0.9"/><path d="M3.2 1.5 V7.5 M5.8 1.5 V7.5" stroke="#5c8bb0" stroke-width="0.8"/></svg>
<div class="t s" style="left:841.60px;top:271.70px;font-size:7.5px;line-height:12px;color:#3274cf;">ws-discovery</div>
<svg class="b" style="left:896.5px;top:216.6px;" width="10" height="10" viewBox="0 0 10 10"><g transform="translate(-0.6 -0.6) scale(1.12)"><path d="M1.4 1.4 L5.6 5.6" stroke="#e2b24a" stroke-width="1.7" stroke-linecap="round"/><rect x="-1.9" y="-1.1" width="3.8" height="2.2" rx="1.1" transform="translate(7.4 7.4) rotate(45)" fill="none" stroke="#e2b24a" stroke-width="1"/><path d="M4.6 5.4 L6.9 3.1" stroke="#3f7fb8" stroke-width="1.3"/><rect x="-1.9" y="-1.1" width="3.8" height="2.2" rx="1.1" transform="translate(2.6 7.4) rotate(-45)" fill="none" stroke="#3f7fb8" stroke-width="1"/><path d="M6.2 1.3 A2 2 0 1 0 8.7 3.8 L7.6 2.4 Z" fill="#3f7fb8"/></g></svg>
<div class="t s" style="left:908.50px;top:215.80px;font-size:7.5px;line-height:12px;color:#3274cf;">application-...</div>
<svg class="b" style="left:963.9px;top:217.5px;" width="10" height="10" viewBox="0 0 10 10"><circle cx="4.5" cy="4.5" r="3.9" fill="none" stroke="#3aa64a" stroke-width="1.1"/><path d="M2.5 4.6 L4 6.1 L6.6 3.2" stroke="#3aa64a" stroke-width="1.1" fill="none"/></svg>
<div class="b" style="left:975.5px;top:215.7px;width:13.0px;height:12px;overflow:hidden">
<div class="t s" style="left:0.00px;top:0.73px;font-size:8.0px;line-height:12px;color:#3274cf;">Allow</div>
</div>
<div class="t s" style="left:136.00px;top:290.50px;font-size:7.8px;line-height:12px;color:#333;">34</div>
<div class="b" style="left:151px;top:288px;width:208.7px;height:15px;background:#e6e9ec;"></div>
<div class="b" style="left:152px;top:289px;width:73px;height:15px;background:linear-gradient(160deg,#dde4ec,#f1f5fa);filter:blur(1.3px);"></div>
<div class="t s" style="left:225.40px;top:290.90px;font-size:7.5px;line-height:12px;color:#3274cf;">Ne</div>
<div class="b" style="left:233px;top:293.3px;width:62px;height:27.5px;background:linear-gradient(160deg,#dfe8f2,#f1f5fa);filter:blur(1.3px);"></div>
<div class="t s" style="left:295.00px;top:290.90px;font-size:7.5px;line-height:12px;color:#3274cf;letter-spacing:-0.1px;">9475329978-dhcp</div>
<svg class="b" style="left:362px;top:293px;" width="7" height="5" viewBox="0 0 7 5"><path d="M0.5 0.8 L3.5 3.8 L6.5 0.8" stroke="#777" stroke-width="0.9" fill="none"/></svg>
<div class="t s" style="left:414.30px;top:290.90px;font-size:7.5px;line-height:12px;color:#3274cf;">any</div>
<div class="t s" style="left:488.30px;top:290.90px;font-size:7.5px;line-height:12px;color:#3274cf;">any</div>
<svg class="b" style="left:555px;top:292.0px;" width="11" height="10" viewBox="0 0 11 10"><rect x="0.5" y="0.5" width="9" height="6" rx="0.8" fill="#e8f0f6" stroke="#4f86b5" stroke-width="0.9"/><path d="M3 9 H7 M5 6.5 V9" stroke="#4f86b5" stroke-width="0.9"/><circle cx="8.3" cy="5.6" r="2.1" fill="#59b15c"/></svg>
<div class="b" style="left:567.6px;top:290px;width:49px;height:12px;background:linear-gradient(160deg,#dfe7ee,#f1f5fa);filter:blur(1.3px);"></div>
<div class="t s" style="left:622.10px;top:290.90px;font-size:7.5px;line-height:12px;color:#3274cf;">any</div>
<div class="t s" style="left:689.00px;top:290.90px;font-size:7.5px;line-height:12px;color:#3274cf;">any</div>
<div class="t s" style="left:761.80px;top:290.90px;font-size:7.5px;line-height:12px;color:#3274cf;">any</div>
<svg class="b" style="left:830.0999999999999px;top:293.7px;" width="10" height="10" viewBox="0 0 10 10"><rect x="0.5" y="0.5" width="8" height="8" rx="1.6" fill="#c8d8e6" stroke="#5c8bb0" stroke-width="0.9"/><path d="M3.2 1.5 V7.5 M5.8 1.5 V7.5" stroke="#5c8bb0" stroke-width="0.8"/></svg>
<div class="t s" style="left:841.60px;top:291.60px;font-size:7.5px;line-height:12px;color:#3274cf;">dhcp</div>
<svg class="b" style="left:830.0999999999999px;top:312.4px;" width="10" height="10" viewBox="0 0 10 10"><rect x="0.5" y="0.5" width="8" height="8" rx="1.6" fill="#c8d8e6" stroke="#5c8bb0" stroke-width="0.9"/><path d="M3.2 1.5 V7.5 M5.8 1.5 V7.5" stroke="#5c8bb0" stroke-width="0.8"/></svg>
<div class="t s" style="left:841.60px;top:310.30px;font-size:7.5px;line-height:12px;color:#3274cf;">ws-discovery</div>
<svg class="b" style="left:896.5px;top:292.59999999999997px;" width="10" height="10" viewBox="0 0 10 10"><g transform="translate(-0.6 -0.6) scale(1.12)"><path d="M1.4 1.4 L5.6 5.6" stroke="#e2b24a" stroke-width="1.7" stroke-linecap="round"/><rect x="-1.9" y="-1.1" width="3.8" height="2.2" rx="1.1" transform="translate(7.4 7.4) rotate(45)" fill="none" stroke="#e2b24a" stroke-width="1"/><path d="M4.6 5.4 L6.9 3.1" stroke="#3f7fb8" stroke-width="1.3"/><rect x="-1.9" y="-1.1" width="3.8" height="2.2" rx="1.1" transform="translate(2.6 7.4) rotate(-45)" fill="none" stroke="#3f7fb8" stroke-width="1"/><path d="M6.2 1.3 A2 2 0 1 0 8.7 3.8 L7.6 2.4 Z" fill="#3f7fb8"/></g></svg>
<div class="t s" style="left:908.50px;top:291.80px;font-size:7.5px;line-height:12px;color:#3274cf;">application-...</div>
<svg class="b" style="left:963.9px;top:293.5px;" width="10" height="10" viewBox="0 0 10 10"><circle cx="4.5" cy="4.5" r="3.9" fill="none" stroke="#3aa64a" stroke-width="1.1"/><path d="M2.5 4.6 L4 6.1 L6.6 3.2" stroke="#3aa64a" stroke-width="1.1" fill="none"/></svg>
<div class="b" style="left:975.5px;top:291.7px;width:13.0px;height:12px;overflow:hidden">
<div class="t s" style="left:0.00px;top:0.73px;font-size:8.0px;line-height:12px;color:#3274cf;">Allow</div>
</div>
<div class="t s" style="left:136.00px;top:329.00px;font-size:7.8px;line-height:12px;color:#333;">35</div>
<div class="b" style="left:152.5px;top:328.5px;width:75px;height:11.5px;background:linear-gradient(160deg,#e4ebf5,#f1f5fa);filter:blur(1.3px);"></div>
<div class="b" style="left:233px;top:328.5px;width:61px;height:29px;background:linear-gradient(160deg,#e4ebf5,#f1f5fa);filter:blur(1.3px);"></div>
<div class="t s" style="left:300.80px;top:329.40px;font-size:7.5px;line-height:12px;color:#2b2b2b;">universal</div>
<div class="t s" style="left:347.30px;top:329.40px;font-size:7.5px;line-height:12px;color:#3274cf;">any</div>
<div class="t s" style="left:414.30px;top:329.40px;font-size:7.5px;line-height:12px;color:#3274cf;">any</div>
<div class="t s" style="left:488.30px;top:329.40px;font-size:7.5px;line-height:12px;color:#3274cf;">any</div>
<svg class="b" style="left:555px;top:330.5px;" width="11" height="10" viewBox="0 0 11 10"><rect x="0.5" y="0.5" width="9" height="6" rx="0.8" fill="#e8f0f6" stroke="#4f86b5" stroke-width="0.9"/><path d="M3 9 H7 M5 6.5 V9" stroke="#4f86b5" stroke-width="0.9"/><circle cx="8.3" cy="5.6" r="2.1" fill="#59b15c"/></svg>
<div class="b" style="left:567.6px;top:329px;width:49px;height:15px;background:linear-gradient(160deg,#e4ebf5,#f1f5fa);filter:blur(1.3px);"></div>
<div class="t s" style="left:622.10px;top:329.40px;font-size:7.5px;line-height:12px;color:#3274cf;">any</div>
<div class="t s" style="left:689.00px;top:329.40px;font-size:7.5px;line-height:12px;color:#3274cf;">any</div>
<div class="t s" style="left:761.80px;top:329.40px;font-size:7.5px;line-height:12px;color:#3274cf;">any</div>
<svg class="b" style="left:830.0999999999999px;top:332.2px;" width="10" height="10" viewBox="0 0 10 10"><rect x="0.5" y="0.5" width="8" height="8" rx="1.6" fill="#c8d8e6" stroke="#5c8bb0" stroke-width="0.9"/><path d="M3.2 1.5 V7.5 M5.8 1.5 V7.5" stroke="#5c8bb0" stroke-width="0.8"/></svg>
<div class="t s" style="left:841.60px;top:330.10px;font-size:7.5px;line-height:12px;color:#3274cf;">dns</div>
<svg class="b" style="left:830.0999999999999px;top:350.9px;" width="10" height="10" viewBox="0 0 10 10"><rect x="0.5" y="0.5" width="8" height="8" rx="1.6" fill="#c8d8e6" stroke="#5c8bb0" stroke-width="0.9"/><path d="M3.2 1.5 V7.5 M5.8 1.5 V7.5" stroke="#5c8bb0" stroke-width="0.8"/><circle cx="6.5" cy="6.5" r="2.4" fill="#ec6a50"/><circle cx="6.5" cy="6.5" r="3.3" fill="none" stroke="#ec6a50" stroke-width="1" stroke-dasharray="1 0.9"/></svg>
<div class="t s" style="left:841.60px;top:348.80px;font-size:7.5px;line-height:12px;color:#3274cf;">dns-base</div>
<svg class="b" style="left:830.0999999999999px;top:369.59999999999997px;" width="10" height="10" viewBox="0 0 10 10"><rect x="0.5" y="0.5" width="8" height="8" rx="1.6" fill="#c8d8e6" stroke="#5c8bb0" stroke-width="0.9"/><path d="M3.2 1.5 V7.5 M5.8 1.5 V7.5" stroke="#5c8bb0" stroke-width="0.8"/></svg>
<div class="t s" style="left:841.60px;top:367.50px;font-size:7.5px;line-height:12px;color:#3274cf;">icmp</div>
<svg class="b" style="left:896.5px;top:331.09999999999997px;" width="10" height="10" viewBox="0 0 10 10"><g transform="translate(-0.6 -0.6) scale(1.12)"><path d="M1.4 1.4 L5.6 5.6" stroke="#e2b24a" stroke-width="1.7" stroke-linecap="round"/><rect x="-1.9" y="-1.1" width="3.8" height="2.2" rx="1.1" transform="translate(7.4 7.4) rotate(45)" fill="none" stroke="#e2b24a" stroke-width="1"/><path d="M4.6 5.4 L6.9 3.1" stroke="#3f7fb8" stroke-width="1.3"/><rect x="-1.9" y="-1.1" width="3.8" height="2.2" rx="1.1" transform="translate(2.6 7.4) rotate(-45)" fill="none" stroke="#3f7fb8" stroke-width="1"/><path d="M6.2 1.3 A2 2 0 1 0 8.7 3.8 L7.6 2.4 Z" fill="#3f7fb8"/></g></svg>
<div class="t s" style="left:908.50px;top:330.30px;font-size:7.5px;line-height:12px;color:#3274cf;">application-...</div>
<svg class="b" style="left:963.9px;top:332.0px;" width="10" height="10" viewBox="0 0 10 10"><circle cx="4.5" cy="4.5" r="3.9" fill="none" stroke="#3aa64a" stroke-width="1.1"/><path d="M2.5 4.6 L4 6.1 L6.6 3.2" stroke="#3aa64a" stroke-width="1.1" fill="none"/></svg>
<div class="b" style="left:975.5px;top:330.2px;width:13.0px;height:12px;overflow:hidden">
<div class="t s" style="left:0.00px;top:0.73px;font-size:8.0px;line-height:12px;color:#3274cf;">Allow</div>
</div>
<div class="t s" style="left:136.00px;top:386.20px;font-size:7.8px;line-height:12px;color:#333;">36</div>
<div class="t" style="left:153.80px;top:386.77px;font-size:7.0px;line-height:12px;color:#9a9a9a;font-style:italic;letter-spacing:-0.1px;">Raspberry PI</div>
<div class="t" style="left:233.70px;top:386.77px;font-size:7.0px;line-height:12px;color:#9a9a9a;font-style:italic;">none</div>
<div class="t" style="left:300.80px;top:386.60px;font-size:7.5px;line-height:12px;color:#9a9a9a;font-style:italic;">universal</div>
<div class="t" style="left:347.30px;top:386.60px;font-size:7.5px;line-height:12px;color:#9a9a9a;font-style:italic;">any</div>
<div class="t" style="left:414.30px;top:386.60px;font-size:7.5px;line-height:12px;color:#9a9a9a;font-style:italic;">any</div>
<div class="t" style="left:488.30px;top:386.60px;font-size:7.5px;line-height:12px;color:#9a9a9a;font-style:italic;">any</div>
<svg class="b" style="left:555px;top:387.7px;" width="11" height="10" viewBox="0 0 11 10"><rect x="0.5" y="0.5" width="9" height="6" rx="0.8" fill="#e8f0f6" stroke="#b3c8da" stroke-width="0.9"/><path d="M3 9 H7 M5 6.5 V9" stroke="#b3c8da" stroke-width="0.9"/><circle cx="8.3" cy="5.6" r="2.1" fill="#b8dcb8"/></svg>
<div class="t" style="left:567.50px;top:386.77px;font-size:7.0px;line-height:12px;color:#9a9a9a;font-style:italic;letter-spacing:-0.1px;">Raspberry Pi ...</div>
<div class="t" style="left:622.10px;top:386.60px;font-size:7.5px;line-height:12px;color:#9a9a9a;font-style:italic;">any</div>
<div class="t" style="left:689.00px;top:386.60px;font-size:7.5px;line-height:12px;color:#9a9a9a;font-style:italic;">any</div>
<div class="t" style="left:761.80px;top:386.60px;font-size:7.5px;line-height:12px;color:#9a9a9a;font-style:italic;">any</div>
<svg class="b" style="left:830.0999999999999px;top:389.4px;" width="10" height="10" viewBox="0 0 10 10"><g opacity="0.35"><rect x="0.5" y="0.5" width="8" height="8" rx="1.6" fill="#c8d8e6" stroke="#5c8bb0" stroke-width="0.9"/><path d="M3.2 1.5 V7.5 M5.8 1.5 V7.5" stroke="#5c8bb0" stroke-width="0.8"/></g></svg>
<div class="t" style="left:841.60px;top:387.37px;font-size:7.3px;line-height:12px;color:#9a9a9a;font-style:italic;letter-spacing:-0.2px;">dns</div>
<svg class="b" style="left:830.0999999999999px;top:408.09999999999997px;" width="10" height="10" viewBox="0 0 10 10"><g opacity="0.35"><rect x="0.5" y="0.5" width="8" height="8" rx="1.6" fill="#c8d8e6" stroke="#5c8bb0" stroke-width="0.9"/><path d="M3.2 1.5 V7.5 M5.8 1.5 V7.5" stroke="#5c8bb0" stroke-width="0.8"/></g></svg>
<div class="t" style="left:841.60px;top:406.07px;font-size:7.3px;line-height:12px;color:#9a9a9a;font-style:italic;letter-spacing:-0.2px;">ldap</div>
<svg class="b" style="left:830.0999999999999px;top:426.79999999999995px;" width="10" height="10" viewBox="0 0 10 10"><g opacity="0.35"><rect x="0.5" y="0.5" width="8" height="8" rx="1.6" fill="#c8d8e6" stroke="#5c8bb0" stroke-width="0.9"/><path d="M3.2 1.5 V7.5 M5.8 1.5 V7.5" stroke="#5c8bb0" stroke-width="0.8"/></g></svg>
<div class="t" style="left:841.60px;top:424.77px;font-size:7.3px;line-height:12px;color:#9a9a9a;font-style:italic;letter-spacing:-0.2px;">ntp</div>
<svg class="b" style="left:896.5px;top:388.29999999999995px;" width="10" height="10" viewBox="0 0 10 10"><g opacity="0.4"><g transform="translate(-0.6 -0.6) scale(1.12)"><path d="M1.4 1.4 L5.6 5.6" stroke="#e2b24a" stroke-width="1.7" stroke-linecap="round"/><rect x="-1.9" y="-1.1" width="3.8" height="2.2" rx="1.1" transform="translate(7.4 7.4) rotate(45)" fill="none" stroke="#e2b24a" stroke-width="1"/><path d="M4.6 5.4 L6.9 3.1" stroke="#3f7fb8" stroke-width="1.3"/><rect x="-1.9" y="-1.1" width="3.8" height="2.2" rx="1.1" transform="translate(2.6 7.4) rotate(-45)" fill="none" stroke="#3f7fb8" stroke-width="1"/><path d="M6.2 1.3 A2 2 0 1 0 8.7 3.8 L7.6 2.4 Z" fill="#3f7fb8"/></g></g></svg>
<div class="t" style="left:908.50px;top:387.50px;font-size:7.5px;line-height:12px;color:#9a9a9a;font-style:italic;">application-d...</div>
<svg class="b" style="left:963.9px;top:389.2px;" width="10" height="10" viewBox="0 0 10 10"><circle cx="4.5" cy="4.5" r="3.9" fill="none" stroke="#a8d8a8" stroke-width="1.1"/><path d="M2.5 4.6 L4 6.1 L6.6 3.2" stroke="#a8d8a8" stroke-width="1.1" fill="none"/></svg>
<div class="b" style="left:975.5px;top:387.4px;width:13.0px;height:12px;overflow:hidden">
<div class="t" style="left:0.00px;top:0.73px;font-size:8.0px;line-height:12px;color:#9a9a9a;font-style:italic;">Allow</div>
</div>
<div class="t s" style="left:136.00px;top:445.40px;font-size:7.8px;line-height:12px;color:#333;">37</div>
<div class="t s" style="left:153.80px;top:445.50px;font-size:7.5px;line-height:12px;color:#3274cf;">Outbound-WinClient</div>
<div class="b" style="left:233.9px;top:445px;width:55.1px;height:11.3px;background:#f2b62c;border-radius:1px;"></div>
<div class="t s" style="left:239.50px;top:445.54px;font-size:7.4px;line-height:12px;color:#fff;letter-spacing:0.1px;">Infrastructure</div>
<div class="t s" style="left:300.80px;top:445.50px;font-size:7.5px;line-height:12px;color:#2b2b2b;">universal</div>
<svg class="b" style="left:348.0px;top:448.6px;" width="10" height="8" viewBox="0 0 10 8"><path d="M1.2 3.5 V7 M8.8 3.5 V7" stroke="#333" stroke-width="1"/><rect x="0.3" y="0.3" width="9.4" height="4.2" fill="#1d1d1d"/><path d="M1.2 4.3 L3.6 0.5 M4.4 4.3 L6.8 0.5 M7.6 4.3 L9.6 1.2" stroke="#f2c200" stroke-width="1.3"/></svg>
<div class="t s" style="left:360.10px;top:445.50px;font-size:7.5px;line-height:12px;color:#3274cf;">L3-Trust</div>
<svg class="b" style="left:414.0px;top:446.6px;" width="12" height="11" viewBox="0 0 12 11"><rect x="0.6" y="0.6" width="10.5" height="6.5" rx="1" fill="#eaf1f7" stroke="#4f86b5" stroke-width="1"/><rect x="2.2" y="2.2" width="7.5" height="3.5" fill="none" stroke="#4f86b5" stroke-width="0.7"/><path d="M3.5 10 H8.5 M6 7 V10" stroke="#4f86b5" stroke-width="1"/></svg>
<div class="t s" style="left:427.20px;top:445.50px;font-size:7.5px;line-height:12px;color:#3274cf;letter-spacing:-0.05px;">Local-Win-Clie...</div>
<div class="t s" style="left:488.30px;top:445.50px;font-size:7.5px;line-height:12px;color:#3274cf;">any</div>
<div class="t s" style="left:554.80px;top:445.50px;font-size:7.5px;line-height:12px;color:#3274cf;">any</div>
<svg class="b" style="left:622.8px;top:448.6px;" width="10" height="8" viewBox="0 0 10 8"><path d="M1.2 3.5 V7 M8.8 3.5 V7" stroke="#333" stroke-width="1"/><rect x="0.3" y="0.3" width="9.4" height="4.2" fill="#1d1d1d"/><path d="M1.2 4.3 L3.6 0.5 M4.4 4.3 L6.8 0.5 M7.6 4.3 L9.6 1.2" stroke="#f2c200" stroke-width="1.3"/></svg>
<div class="t s" style="left:634.90px;top:445.50px;font-size:7.5px;line-height:12px;color:#3274cf;">L3-Untrust</div>
<div class="t s" style="left:689.00px;top:445.50px;font-size:7.5px;line-height:12px;color:#3274cf;">any</div>
<div class="t s" style="left:761.80px;top:445.50px;font-size:7.5px;line-height:12px;color:#3274cf;">any</div>
<div class="t s" style="left:829.10px;top:445.50px;font-size:7.5px;line-height:12px;color:#3274cf;">any</div>
<svg class="b" style="left:896.5px;top:447.2px;" width="10" height="10" viewBox="0 0 10 10"><g transform="translate(-0.6 -0.6) scale(1.12)"><path d="M1.4 1.4 L5.6 5.6" stroke="#e2b24a" stroke-width="1.7" stroke-linecap="round"/><rect x="-1.9" y="-1.1" width="3.8" height="2.2" rx="1.1" transform="translate(7.4 7.4) rotate(45)" fill="none" stroke="#e2b24a" stroke-width="1"/><path d="M4.6 5.4 L6.9 3.1" stroke="#3f7fb8" stroke-width="1.3"/><rect x="-1.9" y="-1.1" width="3.8" height="2.2" rx="1.1" transform="translate(2.6 7.4) rotate(-45)" fill="none" stroke="#3f7fb8" stroke-width="1"/><path d="M6.2 1.3 A2 2 0 1 0 8.7 3.8 L7.6 2.4 Z" fill="#3f7fb8"/></g></svg>
<div class="t s" style="left:908.50px;top:446.40px;font-size:7.5px;line-height:12px;color:#3274cf;">application-...</div>
<svg class="b" style="left:963.9px;top:448.1px;" width="10" height="10" viewBox="0 0 10 10"><circle cx="4.5" cy="4.5" r="3.9" fill="none" stroke="#3aa64a" stroke-width="1.1"/><path d="M2.5 4.6 L4 6.1 L6.6 3.2" stroke="#3aa64a" stroke-width="1.1" fill="none"/></svg>
<div class="b" style="left:975.5px;top:446.3px;width:13.0px;height:12px;overflow:hidden">
<div class="t s" style="left:0.00px;top:0.73px;font-size:8.0px;line-height:12px;color:#3274cf;">Allow</div>
</div>
<div class="t s" style="left:136.00px;top:465.90px;font-size:7.8px;line-height:12px;color:#333;">38</div>
<div class="t s" style="left:153.80px;top:466.00px;font-size:7.5px;line-height:12px;color:#3274cf;">Outbound-Trust</div>
<div class="b" style="left:233.9px;top:465.7px;width:55.1px;height:10.2px;background:#f2b62c;border-radius:1px;"></div>
<div class="t s" style="left:239.50px;top:466.04px;font-size:7.4px;line-height:12px;color:#fff;letter-spacing:0.1px;">Infrastructure</div>
<div class="t s" style="left:300.80px;top:466.00px;font-size:7.5px;line-height:12px;color:#2b2b2b;">universal</div>
<svg class="b" style="left:348.0px;top:469.1px;" width="10" height="8" viewBox="0 0 10 8"><path d="M1.2 3.5 V7 M8.8 3.5 V7" stroke="#333" stroke-width="1"/><rect x="0.3" y="0.3" width="9.4" height="4.2" fill="#1d1d1d"/><path d="M1.2 4.3 L3.6 0.5 M4.4 4.3 L6.8 0.5 M7.6 4.3 L9.6 1.2" stroke="#f2c200" stroke-width="1.3"/></svg>
<div class="t s" style="left:360.10px;top:466.00px;font-size:7.5px;line-height:12px;color:#3274cf;">L3-Trust</div>
<div class="t s" style="left:414.30px;top:466.00px;font-size:7.5px;line-height:12px;color:#3274cf;">any</div>
<div class="t s" style="left:488.30px;top:466.00px;font-size:7.5px;line-height:12px;color:#3274cf;">any</div>
<div class="t s" style="left:554.80px;top:466.00px;font-size:7.5px;line-height:12px;color:#3274cf;">any</div>
<svg class="b" style="left:622.8px;top:469.1px;" width="10" height="8" viewBox="0 0 10 8"><path d="M1.2 3.5 V7 M8.8 3.5 V7" stroke="#333" stroke-width="1"/><rect x="0.3" y="0.3" width="9.4" height="4.2" fill="#1d1d1d"/><path d="M1.2 4.3 L3.6 0.5 M4.4 4.3 L6.8 0.5 M7.6 4.3 L9.6 1.2" stroke="#f2c200" stroke-width="1.3"/></svg>
<div class="t s" style="left:634.90px;top:466.00px;font-size:7.5px;line-height:12px;color:#3274cf;">L3-Untrust</div>
<svg class="b" style="left:688.7px;top:467.1px;" width="12" height="10" viewBox="0 0 12 10"><rect x="0.6" y="0.6" width="10" height="6.5" rx="1.5" fill="#eaf1f7" stroke="#4f86b5" stroke-width="1"/><path d="M1 4 H10" stroke="#4f86b5" stroke-width="0.8"/><rect x="2" y="7" width="8" height="2.2" rx="1" fill="none" stroke="#4f86b5" stroke-width="0.8"/></svg>
<div class="b" style="left:701.2px;top:463.5px;width:42px;height:12.5px;background:linear-gradient(160deg,#f1e2c0,#f1f5fa);filter:blur(1.3px);"></div>
<div class="t s" style="left:761.80px;top:466.00px;font-size:7.5px;line-height:12px;color:#3274cf;">any</div>
<div class="t s" style="left:829.10px;top:466.00px;font-size:7.5px;line-height:12px;color:#3274cf;">any</div>
<svg class="b" style="left:896.5px;top:467.7px;" width="10" height="10" viewBox="0 0 10 10"><g transform="translate(-0.6 -0.6) scale(1.12)"><path d="M1.4 1.4 L5.6 5.6" stroke="#e2b24a" stroke-width="1.7" stroke-linecap="round"/><rect x="-1.9" y="-1.1" width="3.8" height="2.2" rx="1.1" transform="translate(7.4 7.4) rotate(45)" fill="none" stroke="#e2b24a" stroke-width="1"/><path d="M4.6 5.4 L6.9 3.1" stroke="#3f7fb8" stroke-width="1.3"/><rect x="-1.9" y="-1.1" width="3.8" height="2.2" rx="1.1" transform="translate(2.6 7.4) rotate(-45)" fill="none" stroke="#3f7fb8" stroke-width="1"/><path d="M6.2 1.3 A2 2 0 1 0 8.7 3.8 L7.6 2.4 Z" fill="#3f7fb8"/></g></svg>
<div class="t s" style="left:908.50px;top:466.90px;font-size:7.5px;line-height:12px;color:#3274cf;">application-...</div>
<svg class="b" style="left:963.9px;top:468.6px;" width="10" height="10" viewBox="0 0 10 10"><circle cx="4.5" cy="4.5" r="3.9" fill="none" stroke="#3aa64a" stroke-width="1.1"/><path d="M2.5 4.6 L4 6.1 L6.6 3.2" stroke="#3aa64a" stroke-width="1.1" fill="none"/></svg>
<div class="b" style="left:975.5px;top:466.8px;width:13.0px;height:12px;overflow:hidden">
<div class="t s" style="left:0.00px;top:0.73px;font-size:8.0px;line-height:12px;color:#3274cf;">Allow</div>
</div>
<div class="b" style="left:130.5px;top:475.6px;width:869px;height:10.5px;background:#fafafa;"></div>
<div class="b" style="left:132.3px;top:478.2px;width:454px;height:5.6px;background:#c4c4c4;border-radius:3px;"></div>
<div class="b" style="left:130.5px;top:485.8px;width:869px;height:1px;background:#e4e4e4;"></div>
<div class="b" style="left:988.5px;top:115.2px;width:10.5px;height:371px;background:#fafafa;"></div>
<div class="b" style="left:988.5px;top:115.2px;width:0.8px;height:371px;background:#e8e8e8;"></div>
<div class="b" style="left:992px;top:248px;width:5.7px;height:76.5px;background:#c2c2c2;border-radius:3px;"></div>
<div class="b" style="left:130.5px;top:486.5px;width:869px;height:17px;background:#ffffff;"></div>
<svg class="b" style="left:133.8px;top:489.8px;" width="11" height="11" viewBox="0 0 11 11"><circle cx="5.5" cy="5.5" r="4.8" fill="none" stroke="#3f86c6" stroke-width="0.9"/><path d="M5.5 3 V8 M3 5.5 H8" stroke="#3f86c6" stroke-width="0.9"/></svg>
<div class="t s" style="left:146.50px;top:491.06px;font-size:8.2px;line-height:12px;color:#3a3f47;letter-spacing:-0.1px;">Add</div>
<svg class="b" style="left:169.5px;top:489.8px;" width="11" height="11" viewBox="0 0 11 11"><circle cx="5.5" cy="5.5" r="4.8" fill="none" stroke="#d0505a" stroke-width="0.9"/><path d="M3 5.5 H8" stroke="#d0505a" stroke-width="0.9"/></svg>
<div class="t s" style="left:181.50px;top:491.06px;font-size:8.2px;line-height:12px;color:#3a3f47;letter-spacing:-0.1px;">Delete</div>
<svg class="b" style="left:213.8px;top:489.8px;" width="11" height="11" viewBox="0 0 11 11"><circle cx="5.5" cy="5.5" r="4.8" fill="none" stroke="#3f86c6" stroke-width="0.9"/><rect x="3" y="3.2" width="3.2" height="3.2" rx="1" fill="none" stroke="#3f86c6" stroke-width="0.7"/><rect x="4.8" y="4.8" width="3.2" height="3.2" rx="1" fill="none" stroke="#3f86c6" stroke-width="0.7"/></svg>
<div class="t s" style="left:225.80px;top:491.06px;font-size:8.2px;line-height:12px;color:#3a3f47;letter-spacing:-0.1px;">Clone</div>
<svg class="b" style="left:255px;top:490.6px;" width="10" height="10" viewBox="0 0 10 10"><circle cx="5" cy="5" r="3.2" fill="none" stroke="#f0b8b0" stroke-width="1.6" stroke-dasharray="1.2 0.8"/><circle cx="5" cy="5" r="1.3" fill="none" stroke="#f0b8b0" stroke-width="0.7"/></svg>
<div class="t s" style="left:267.00px;top:491.06px;font-size:8.2px;line-height:12px;color:#b8b8b8;letter-spacing:-0.1px;">Override</div>
<svg class="b" style="left:309px;top:492px;" width="7" height="7" viewBox="0 0 7 7"><circle cx="3.5" cy="3.5" r="2.2" fill="none" stroke="#b5dcc0" stroke-width="1.4" stroke-dasharray="1 0.7"/></svg>
<div class="t s" style="left:319.00px;top:491.06px;font-size:8.2px;line-height:12px;color:#b8b8b8;letter-spacing:-0.1px;">Revert</div>
<svg class="b" style="left:350px;top:489.8px;" width="11" height="11" viewBox="0 0 11 11"><circle cx="5.3" cy="5.5" r="4.7" fill="none" stroke="#3aa64a" stroke-width="0.9"/><path d="M2.9 5.6 L4.6 7.3 L7.8 3.9" stroke="#3aa64a" stroke-width="0.9" fill="none"/></svg>
<div class="t s" style="left:364.00px;top:491.06px;font-size:8.2px;line-height:12px;color:#3a3f47;letter-spacing:-0.1px;">Enable</div>
<svg class="b" style="left:396px;top:489.8px;" width="11" height="11" viewBox="0 0 11 11"><circle cx="5.3" cy="5.5" r="4.7" fill="none" stroke="#d0505a" stroke-width="0.9"/><path d="M2.1 2.3 L8.5 8.7" stroke="#d0505a" stroke-width="0.9"/></svg>
<div class="t s" style="left:409.60px;top:491.06px;font-size:8.2px;line-height:12px;color:#3a3f47;letter-spacing:-0.1px;">Disable</div>
<div class="t s" style="left:446.60px;top:491.56px;font-size:8.2px;line-height:12px;color:#3a3f47;letter-spacing:-0.1px;">Move</div>
<svg class="b" style="left:470.3px;top:493.5px;" width="4" height="3" viewBox="0 0 4 3"><path d="M0 0 H3.5 L1.75 2.2 Z" fill="#333"/></svg>
<div class="b" style="left:480.5px;top:490px;width:0.8px;height:10px;background:#d8d8d8;"></div>
<svg class="b" style="left:485.6px;top:489.8px;" width="11" height="11" viewBox="0 0 11 11"><circle cx="5.5" cy="5.5" r="4.8" fill="#dbe8f4" stroke="#3f86c6" stroke-width="0.9"/><rect x="3.4" y="2.8" width="4.2" height="5.4" fill="none" stroke="#3f86c6" stroke-width="0.7"/></svg>
<div class="t s" style="left:497.70px;top:491.06px;font-size:8.2px;line-height:12px;color:#3a3f47;letter-spacing:-0.15px;">PDF/CSV</div>
<div class="b" style="left:538.5px;top:490.4px;width:7.5px;height:7.5px;border:0.9px solid #555;border-radius:1px;background:#fff"></div>
<div class="t s" style="left:550.50px;top:491.06px;font-size:8.2px;line-height:12px;color:#3a3f47;letter-spacing:-0.2px;">Highlight Unused Rules</div>
<div class="b" style="left:635.2px;top:490.4px;width:7.5px;height:7.5px;border:0.9px solid #555;border-radius:1px;background:#fff"></div>
<div class="t s" style="left:647.20px;top:491.06px;font-size:8.2px;line-height:12px;color:#3a3f47;letter-spacing:-0.2px;">View Rulebase as Groups</div>
<div class="b" style="left:740.6px;top:490px;width:0.8px;height:10px;background:#d8d8d8;"></div>
<div class="t s" style="left:747.50px;top:491.36px;font-size:8.2px;line-height:12px;color:#3a3f47;letter-spacing:-0.2px;">Reset Rule Hit Counter</div>
<svg class="b" style="left:831.6px;top:493.5px;" width="4" height="3" viewBox="0 0 4 3"><path d="M0 0 H3.5 L1.75 2.2 Z" fill="#333"/></svg>
<div class="t s" style="left:844.40px;top:491.36px;font-size:8.2px;line-height:12px;color:#b0b0b0;letter-spacing:-0.1px;">Group</div>
<svg class="b" style="left:870px;top:493.5px;" width="4" height="3" viewBox="0 0 4 3"><path d="M0 0 H3.5 L1.75 2.2 Z" fill="#bbb"/></svg>
<div class="b" style="left:879.4px;top:490px;width:0.8px;height:10px;background:#d8d8d8;"></div>
<div class="t s" style="left:888.00px;top:491.36px;font-size:8.2px;line-height:12px;color:#3a3f47;letter-spacing:-0.2px;">Test Policy Match</div>
<div class="b" style="left:0px;top:503.7px;width:999px;height:18.3px;background:#0c1219;"></div>
<div class="b" style="left:6px;top:508px;width:113px;height:10px;background:linear-gradient(#3a4350,#1d232c);border-radius:1px;"></div>
<div class="t s" style="left:122.50px;top:507.53px;font-size:8.0px;line-height:12px;color:#c9ccd2;letter-spacing:-0.15px;">Logout</div>
<div class="b" style="left:150.3px;top:508.5px;width:0.8px;height:9px;background:#6b707a;"></div>
<div class="t s" style="left:154.80px;top:507.53px;font-size:8.0px;line-height:12px;color:#c9ccd2;letter-spacing:0.02px;">Last Login Time: 03/13/2023 03:10:54</div>
<div class="b" style="left:294.5px;top:508.5px;width:0.8px;height:9px;background:#6b707a;"></div>
<div class="t s" style="left:298.50px;top:507.53px;font-size:8.0px;line-height:12px;color:#c9ccd2;">Session Expire Time: 03/23/2023 07:47:52</div>
<div class="b" style="left:453.8px;top:508.5px;width:0.8px;height:9px;background:#6b707a;"></div>
<svg class="b" style="left:869px;top:508.5px;" width="11" height="9" viewBox="0 0 11 9"><rect x="0.6" y="0.6" width="9.8" height="7.6" fill="none" stroke="#8c93a6" stroke-width="1"/><path d="M0.8 0.8 L5.5 5 L10.2 0.8" stroke="#8c93a6" stroke-width="1" fill="none"/></svg>
<div class="b" style="left:884.3px;top:508.5px;width:0.8px;height:9px;background:#555b66;"></div>
<div class="t s" style="left:891.80px;top:507.53px;font-size:8.0px;line-height:12px;color:#6a6f78;letter-spacing:-0.15px;">Language</div>
<svg class="b" style="left:933px;top:507.5px;" width="15" height="12" viewBox="0 0 15 12"><path d="M0.7 5.6 L5.4 0.9 L7.3 2.8 L2.6 7.5 Z M3.6 8.6 L8.3 3.9 L10.2 5.8 L5.5 10.5 Z M6.5 2.2 L8.0 0.7 L9.9 2.6 L8.4 4.1 Z M9.4 5.2 L10.9 3.7 L12.8 5.6 L11.3 7.1 Z" fill="#f0642a"/></svg>
<div class="t" style="left:949.30px;top:506.63px;font-size:10.6px;line-height:12px;color:#ffffff;font-weight:bold;">paloalto</div>
<div class="t" style="left:970.60px;top:513.40px;font-size:2.6px;line-height:12px;color:#bbbbbb;font-weight:bold;letter-spacing:0.45px;">NETWORKS</div>
</body></html>
